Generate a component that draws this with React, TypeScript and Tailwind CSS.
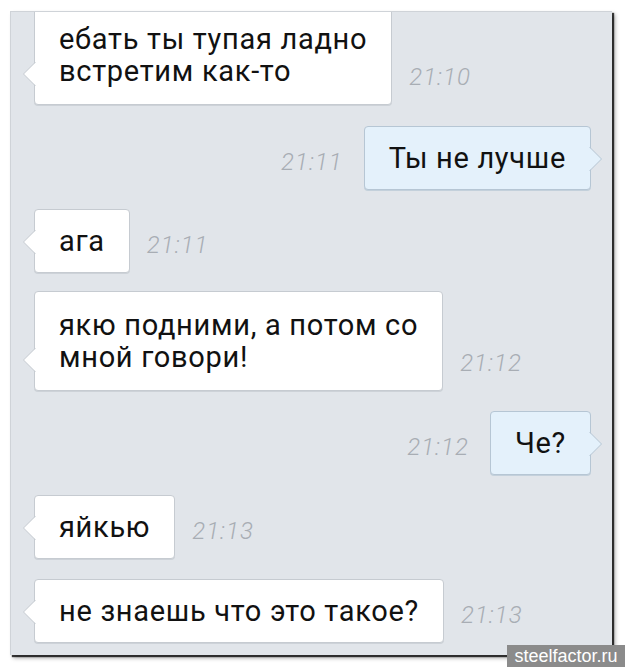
type Msg = {
  out?: boolean;
  lines: string[];
  time: string;
  mt: string;
};

const messages: Msg[] = [
  { lines: ["ебать ты тупая ладно", "встретим как-то"], time: "21:10", mt: "mt-[-7px]" },
  { out: true, lines: ["Ты не лучше"], time: "21:11", mt: "mt-[21px]" },
  { lines: ["ага"], time: "21:11", mt: "mt-[19px]" },
  { lines: ["якю подними, а потом со", "мной говори!"], time: "21:12", mt: "mt-[18px]" },
  { out: true, lines: ["Че?"], time: "21:12", mt: "mt-[20px]" },
  { lines: ["яйкью"], time: "21:13", mt: "mt-[20px]" },
  { lines: ["не знаешь что это такое?"], time: "21:13", mt: "mt-[20px]" },
];

function Tail({ out }: { out?: boolean }) {
  return (
    <svg
      width="14"
      height="24"
      viewBox="0 0 14 24"
      className={out ? "absolute right-[-13px] bottom-[18px] rotate-180" : "absolute left-[-13px] bottom-[18px]"}
    >
      <polygon points="14,0 1.5,12 14,24" fill={out ? "#e4f1fb" : "#ffffff"} />
      <path d="M13.5 0 L1.5 12 L13.5 24" fill="none" stroke={out ? "#b6c6d4" : "#c6cbd1"} strokeWidth="1" />
    </svg>
  );
}

function Time({ t }: { t: string }) {
  return (
    <span className="mb-[14px] text-[24px] leading-7 font-light italic tracking-[1px] text-[#a8adb4] font-['Roboto',sans-serif]">
      {t}
    </span>
  );
}

function Bubble({ m }: { m: Msg }) {
  const double = m.lines.length > 1;
  return (
    <div
      className={
        "relative rounded-[4px] border px-6 text-[29px] leading-8 tracking-[0.7px] text-[#111111] font-['Roboto',sans-serif] " +
        (double ? "py-[17px] " : "py-[15px] ") +
        (m.out
          ? "bg-[#e4f1fb] border-[#b6c6d4] shadow-[0_1px_0_#c3d0db]"
          : "bg-white border-[#c6cbd1] shadow-[0_1px_0_#cdd2d8]")
      }
    >
      {m.lines.map((l, i) => (
        <div key={i} className="whitespace-nowrap">
          {l}
        </div>
      ))}
      <Tail out={m.out} />
    </div>
  );
}

export default function App() {
  return (
    <div className="relative h-[667px] w-[625px] bg-white">
      <div className="absolute left-[10px] top-[11px] h-[644px] w-[602px] overflow-hidden border-l border-t border-[#cfd3d8] bg-[#e1e5ea] shadow-[2px_2px_1px_rgba(0,0,0,0.75),3px_3px_4px_rgba(0,0,0,0.35)]">
        <div className="flex flex-col pl-[23px] pr-[21px]">
          {messages.map((m, i) =>
            m.out ? (
              <div key={i} className={"flex items-end justify-end gap-[21px] " + m.mt}>
                <Time t={m.time} />
                <Bubble m={m} />
              </div>
            ) : (
              <div key={i} className={"flex items-end gap-[17px] " + m.mt}>
                <Bubble m={m} />
                <Time t={m.time} />
              </div>
            )
          )}
        </div>
      </div>
      <div className="absolute right-0 bottom-0 flex h-[22px] w-[118px] items-center justify-center bg-[#8b8b8b] text-[18px] leading-none text-white font-['Liberation_Sans',Arial,sans-serif]">
        steelfactor.ru
      </div>
    </div>
  );
}
